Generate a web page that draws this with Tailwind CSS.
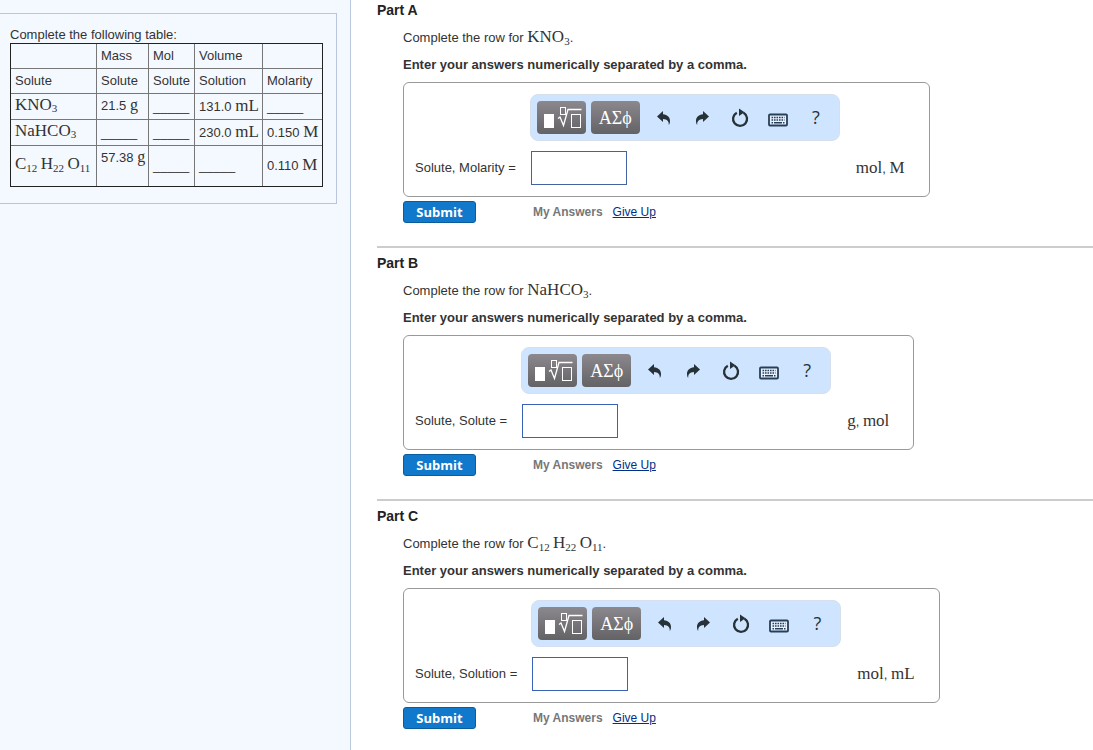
<!DOCTYPE html>
<html lang="en">
<head>
<meta charset="utf-8">
<title>Molarity table</title>
<script src="https://cdn.jsdelivr.net/npm/@tailwindcss/browser@4"></script>
</head>
<body class="bg-white font-['Liberation_Sans',Arial,sans-serif] text-[13px] leading-[18px] text-[#333]">
<svg class="hidden" aria-hidden="true">
  <symbol id="root" viewBox="0 0 40 24">
    <rect x="1" y="9" width="10" height="14" fill="#fff"/>
    <rect x="17.500" y="2.500" width="5" height="7" fill="none" stroke="#fff"/>
    <path d="M15 13.500l2-1.500 3.500 8.500L25 4.500h13.500" fill="none" stroke="#fff" stroke-width="1.300"/>
    <rect x="28.500" y="9.500" width="9" height="13" fill="none" stroke="#fff"/>
  </symbol>
  <symbol id="undo" viewBox="0 0 16 16">
    <path d="M1 6.500L7 1v3.200c4.500.3 7.300 3.300 7 7.300-.1 1.500-.5 2.500-1.200 3.500.2-3.600-1.500-5.800-5.800-6V12z" fill="#263238"/>
  </symbol>
  <symbol id="reset" viewBox="0 0 18 20">
    <path d="M12.500 4.800A7 7 0 1 1 5.800 4.700" fill="none" stroke="#263238" stroke-width="2.300"/>
    <path d="M8 .5l5.500 3.700L8 8z" fill="#263238"/>
  </symbol>
  <symbol id="keys" viewBox="0 0 20 14">
    <rect x="1" y="1.500" width="18" height="11" rx="1" fill="#e8f2ff" stroke="#263f58" stroke-width="1.800"/>
    <path d="M3.500 4.500h13M3.500 7h13" stroke="#263f58" stroke-width="1.500" stroke-dasharray="1.600 .9"/>
    <path d="M3.500 9.800h1.500M6 9.800h8M15 9.800h1.500" stroke="#263f58" stroke-width="1.500"/>
  </symbol>
</svg>

<div class="flex min-h-screen">
  <aside class="w-[351px] shrink-0 border-r border-[#b9c8dc] bg-[#f4f9ff] pt-[13px] pr-[13px]">
    <div class="border-y border-r border-[#b9c5da] pt-3 pb-4 pl-[10px]">
      <p class="leading-[17px]">Complete the following table:</p>
      <table class="w-[313px] table-fixed border-collapse outline -outline-offset-1 outline-[#222] [&_td]:border [&_td]:border-[#777] [&_td]:px-1 [&_td]:whitespace-nowrap">
        <colgroup><col class="w-[86px]"><col class="w-[52px]"><col class="w-[46px]"><col class="w-[68px]"><col class="w-[60px]"></colgroup>
        <tbody>
          <tr class="h-[25px]"><td></td><td>Mass</td><td>Mol</td><td>Volume</td><td></td></tr>
          <tr class="h-[25px]"><td>Solute</td><td>Solute</td><td>Solute</td><td>Solution</td><td>Molarity</td></tr>
          <tr class="h-[26px]"><td class="pb-1 font-['Liberation_Serif',serif] text-[17px] leading-5">KNO<sub class="text-[11px] leading-none">3</sub></td><td class="pb-px">21.5 <span class="font-['Liberation_Serif',serif] text-base leading-none">g</span></td><td>_____</td><td class="pb-px">131.0 <span class="font-['Liberation_Serif',serif] text-[17px] leading-none">mL</span></td><td>_____</td></tr>
          <tr class="h-[26px]"><td class="pb-1 font-['Liberation_Serif',serif] text-[17px] leading-5">NaHCO<sub class="text-[11px] leading-none">3</sub></td><td>_____</td><td>_____</td><td class="pb-px">230.0 <span class="font-['Liberation_Serif',serif] text-[17px] leading-none">mL</span></td><td class="pb-px">0.150 <span class="font-['Liberation_Serif',serif] text-[17px] leading-none">M</span></td></tr>
          <tr class="h-[41px]"><td class="pb-1 font-['Liberation_Serif',serif] text-[17px] leading-5">C<sub class="text-[11px] leading-none">12</sub>&thinsp;H<sub class="text-[11px] leading-none">22</sub>&thinsp;O<sub class="text-[11px] leading-none">11</sub></td><td class="pt-[3px] align-top">57.38 <span class="font-['Liberation_Serif',serif] text-base leading-none">g</span></td><td>_____</td><td>_____</td><td class="pb-px">0.110 <span class="font-['Liberation_Serif',serif] text-[17px] leading-none">M</span></td></tr>
        </tbody>
      </table>
    </div>
  </aside>

  <main class="min-w-0 flex-1 pl-[26px]">
    <section class="border-b-2 border-[#ccc] pt-px pb-[23px]">
      <h2 class="text-sm leading-[19px] font-bold text-[#222]">Part A</h2>
      <div class="pl-[26px]">
        <p class="mt-2 h-5 leading-5">Complete the row for <span class="font-['Liberation_Serif',serif] text-[17px] leading-none">KNO<sub class="text-[11px] leading-none">3</sub></span>.</p>
        <p class="mt-2 font-bold">Enter your answers numerically separated by a comma.</p>
        <div class="mt-2 grid w-max grid-cols-[auto_310px_auto] items-center rounded-md border border-[#999] py-[11px] pr-6 pl-[11px]">
          <div class="col-start-2 flex h-[47px] items-center rounded-lg border border-[#d6e0ec] bg-[#cfe5ff] pl-[6px]">
            <button type="button" aria-label="Templates" class="mr-[5px] flex h-[33px] w-[49px] shrink-0 items-center justify-center rounded bg-linear-to-b from-[#8c898e] to-[#636265] pb-[2px] pl-[3px]"><svg class="h-6 w-10"><use href="#root"/></svg></button>
            <button type="button" class="mr-[5px] h-[33px] w-[49px] shrink-0 rounded bg-linear-to-b from-[#8c898e] to-[#636265] font-['Liberation_Serif',serif] text-lg text-white">ΑΣϕ</button>
            <button type="button" aria-label="Undo" class="flex w-[38px] shrink-0 justify-center"><svg class="size-4"><use href="#undo"/></svg></button>
            <button type="button" aria-label="Redo" class="flex w-[38px] shrink-0 justify-center"><svg class="size-4 -scale-x-100"><use href="#undo"/></svg></button>
            <button type="button" aria-label="Reset" class="flex w-[38px] shrink-0 justify-center"><svg class="h-5 w-[18px]"><use href="#reset"/></svg></button>
            <button type="button" aria-label="Keyboard" class="flex w-[38px] shrink-0 justify-center pt-1"><svg class="h-[14px] w-5"><use href="#keys"/></svg></button>
            <button type="button" aria-label="Help" class="w-[38px] shrink-0 pb-[2px] font-['Open_Sans',sans-serif] text-lg text-[#263238]">?</button>
          </div>
          <label for="a" class="col-start-1 mt-[10px] pr-[14px]">Solute, Molarity =</label>
          <input id="a" type="text" class="mt-[10px] ml-px h-[34px] w-24 border border-[#4463a5] bg-white px-1">
          <span class="mt-[10px] pl-4"><span class="font-['Liberation_Serif',serif] text-[17px] leading-none">mol</span>, <span class="font-['Liberation_Serif',serif] text-[17px] leading-none">M</span></span>
        </div>
        <div class="mt-1 flex h-[22px] items-center">
          <button type="button" class="h-[22px] w-[73px] rounded-[3px] border border-[#0b5c9c] bg-[#1079cc] font-['Open_Sans',sans-serif] text-[13px] leading-none font-bold text-white">Submit</button>
          <span class="ml-[57px] text-xs font-bold text-[#777]">My Answers</span>
          <a href="#" class="ml-[10px] text-xs text-[#003087] underline">Give Up</a>
        </div>
      </div>
    </section>

    <section class="border-b-2 border-[#ccc] pt-[6px] pb-[23px]">
      <h2 class="text-sm leading-[19px] font-bold text-[#222]">Part B</h2>
      <div class="pl-[26px]">
        <p class="mt-2 h-5 leading-5">Complete the row for <span class="font-['Liberation_Serif',serif] text-[17px] leading-none">NaHCO<sub class="text-[11px] leading-none">3</sub></span>.</p>
        <p class="mt-2 font-bold">Enter your answers numerically separated by a comma.</p>
        <div class="mt-2 grid w-max grid-cols-[auto_310px_auto] items-center rounded-md border border-[#999] py-[11px] pr-6 pl-[11px]">
          <div class="col-start-2 flex h-[47px] items-center rounded-lg border border-[#d6e0ec] bg-[#cfe5ff] pl-[6px]">
            <button type="button" aria-label="Templates" class="mr-[5px] flex h-[33px] w-[49px] shrink-0 items-center justify-center rounded bg-linear-to-b from-[#8c898e] to-[#636265] pb-[2px] pl-[3px]"><svg class="h-6 w-10"><use href="#root"/></svg></button>
            <button type="button" class="mr-[5px] h-[33px] w-[49px] shrink-0 rounded bg-linear-to-b from-[#8c898e] to-[#636265] font-['Liberation_Serif',serif] text-lg text-white">ΑΣϕ</button>
            <button type="button" aria-label="Undo" class="flex w-[38px] shrink-0 justify-center"><svg class="size-4"><use href="#undo"/></svg></button>
            <button type="button" aria-label="Redo" class="flex w-[38px] shrink-0 justify-center"><svg class="size-4 -scale-x-100"><use href="#undo"/></svg></button>
            <button type="button" aria-label="Reset" class="flex w-[38px] shrink-0 justify-center"><svg class="h-5 w-[18px]"><use href="#reset"/></svg></button>
            <button type="button" aria-label="Keyboard" class="flex w-[38px] shrink-0 justify-center pt-1"><svg class="h-[14px] w-5"><use href="#keys"/></svg></button>
            <button type="button" aria-label="Help" class="w-[38px] shrink-0 pb-[2px] font-['Open_Sans',sans-serif] text-lg text-[#263238]">?</button>
          </div>
          <label for="b" class="col-start-1 mt-[10px] pr-[14px]">Solute, Solute =</label>
          <input id="b" type="text" class="mt-[10px] ml-px h-[34px] w-24 border border-[#3a63b8] bg-white px-1">
          <span class="mt-[10px] pl-4"><span class="font-['Liberation_Serif',serif] text-[17px] leading-none">g</span>, <span class="font-['Liberation_Serif',serif] text-[17px] leading-none">mol</span></span>
        </div>
        <div class="mt-1 flex h-[22px] items-center">
          <button type="button" class="h-[22px] w-[73px] rounded-[3px] border border-[#0b5c9c] bg-[#1079cc] font-['Open_Sans',sans-serif] text-[13px] leading-none font-bold text-white">Submit</button>
          <span class="ml-[57px] text-xs font-bold text-[#777]">My Answers</span>
          <a href="#" class="ml-[10px] text-xs text-[#003087] underline">Give Up</a>
        </div>
      </div>
    </section>

    <section class="pt-[6px]">
      <h2 class="text-sm leading-[19px] font-bold text-[#222]">Part C</h2>
      <div class="pl-[26px]">
        <p class="mt-2 h-5 leading-5">Complete the row for <span class="font-['Liberation_Serif',serif] text-[17px] leading-none">C<sub class="text-[11px] leading-none">12</sub>&thinsp;H<sub class="text-[11px] leading-none">22</sub>&thinsp;O<sub class="text-[11px] leading-none">11</sub></span>.</p>
        <p class="mt-2 font-bold">Enter your answers numerically separated by a comma.</p>
        <div class="mt-2 grid w-max grid-cols-[auto_310px_auto] items-center rounded-md border border-[#999] py-[11px] pr-6 pl-[11px]">
          <div class="col-start-2 flex h-[47px] items-center rounded-lg border border-[#d6e0ec] bg-[#cfe5ff] pl-[6px]">
            <button type="button" aria-label="Templates" class="mr-[5px] flex h-[33px] w-[49px] shrink-0 items-center justify-center rounded bg-linear-to-b from-[#8c898e] to-[#636265] pb-[2px] pl-[3px]"><svg class="h-6 w-10"><use href="#root"/></svg></button>
            <button type="button" class="mr-[5px] h-[33px] w-[49px] shrink-0 rounded bg-linear-to-b from-[#8c898e] to-[#636265] font-['Liberation_Serif',serif] text-lg text-white">ΑΣϕ</button>
            <button type="button" aria-label="Undo" class="flex w-[38px] shrink-0 justify-center"><svg class="size-4"><use href="#undo"/></svg></button>
            <button type="button" aria-label="Redo" class="flex w-[38px] shrink-0 justify-center"><svg class="size-4 -scale-x-100"><use href="#undo"/></svg></button>
            <button type="button" aria-label="Reset" class="flex w-[38px] shrink-0 justify-center"><svg class="h-5 w-[18px]"><use href="#reset"/></svg></button>
            <button type="button" aria-label="Keyboard" class="flex w-[38px] shrink-0 justify-center pt-1"><svg class="h-[14px] w-5"><use href="#keys"/></svg></button>
            <button type="button" aria-label="Help" class="w-[38px] shrink-0 pb-[2px] font-['Open_Sans',sans-serif] text-lg text-[#263238]">?</button>
          </div>
          <label for="c" class="col-start-1 mt-[10px] pr-[14px]">Solute, Solution =</label>
          <input id="c" type="text" class="mt-[10px] ml-px h-[34px] w-24 border border-[#3a63b8] bg-white px-1">
          <span class="mt-[10px] pl-4"><span class="font-['Liberation_Serif',serif] text-[17px] leading-none">mol</span>, <span class="font-['Liberation_Serif',serif] text-[17px] leading-none">mL</span></span>
        </div>
        <div class="mt-1 flex h-[22px] items-center">
          <button type="button" class="h-[22px] w-[73px] rounded-[3px] border border-[#0b5c9c] bg-[#1079cc] font-['Open_Sans',sans-serif] text-[13px] leading-none font-bold text-white">Submit</button>
          <span class="ml-[57px] text-xs font-bold text-[#777]">My Answers</span>
          <a href="#" class="ml-[10px] text-xs text-[#003087] underline">Give Up</a>
        </div>
      </div>
    </section>
  </main>
</div>
</body>
</html>
